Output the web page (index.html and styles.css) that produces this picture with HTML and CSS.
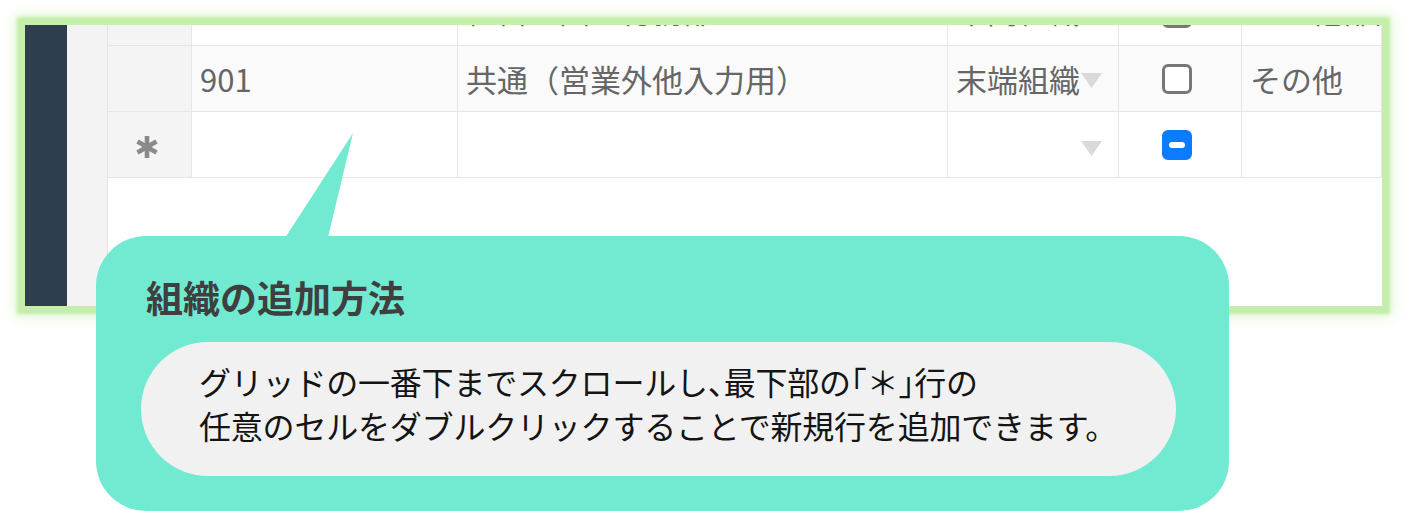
FILE: index.html
```html
<!DOCTYPE html>
<html lang="ja">
<head>
  <meta charset="UTF-8" />
  <title>組織の追加方法</title>
  <link rel="stylesheet" href="styles.css">
</head>
<body>
  <div class="frame">
    <div class="sidebar"></div>
    <div class="gutter"></div>
    <div class="grid">
      <div class="row row-cut">
        <div class="cell head"></div>
        <div class="cell"></div>
        <div class="cell">経営企画・総務部</div>
        <div class="cell select">中間組織<span class="caret"></span></div>
        <div class="cell check"><span class="box"></span></div>
        <div class="cell">その他部門</div>
      </div>
      <div class="row row-alt">
        <div class="cell head"></div>
        <div class="cell">901</div>
        <div class="cell">共通（営業外他入力用）</div>
        <div class="cell select">末端組織<span class="caret"></span></div>
        <div class="cell check"><span class="box"></span></div>
        <div class="cell">その他</div>
      </div>
      <div class="row">
        <div class="cell head">
          <svg class="star" width="24" height="24" viewBox="0 0 24 24">
            <g stroke="#8a8a8a" stroke-width="4.6" stroke-linecap="butt">
              <line x1="12" y1="1" x2="12" y2="23" />
              <line x1="2.5" y1="6.5" x2="21.5" y2="17.5" />
              <line x1="2.5" y1="17.5" x2="21.5" y2="6.5" />
            </g>
          </svg>
        </div>
        <div class="cell"></div>
        <div class="cell"></div>
        <div class="cell select"><span class="caret"></span></div>
        <div class="cell check"><span class="box indeterminate"></span></div>
        <div class="cell"></div>
      </div>
    </div>
  </div>

  <div class="callout">
    <h2>組織の追加方法</h2>
    <div class="note">
      <p>グリッドの一番下までスクロールし<span class="half">、</span>最下部の<span class="half">「</span>＊<span class="half">」</span>行の</p>
      <p>任意のセルをダブルクリックすることで新規行を追加できます。</p>
    </div>
  </div>
</body>
</html>
```

FILE: styles.css
```css
* {
  margin: 0;
  padding: 0;
  box-sizing: border-box;
}
body {
  background: #fff;
  width: 1407px;
  height: 511px;
  overflow: hidden;
  position: relative;
  font-family: "Noto Sans CJK JP", "Noto Sans", sans-serif;
}
.frame {
  margin: 25px 0 0 25px;
  width: 1357px;
  height: 281px;
  display: flex;
  overflow: hidden;
  box-shadow: 0 0 3px 8px #c4eea9, 0 0 12px 10px rgba(196, 238, 169, 0.55);
}
.sidebar {
  width: 42px;
  background: #2f3e4e;
}
.gutter {
  width: 41px;
  background: #f3f3f3;
  border-right: 1px solid #e2e2e2;
}
.grid {
  flex: 1;
  background: #fff;
}
.row {
  display: grid;
  grid-template-columns: 84px 266px 490px 171px 123px 1fr;
  height: 66px;
}
.row-cut {
  margin-top: -45px;
}
.row-cut .cell {
  padding-bottom: 7px;
}
.cell {
  border-right: 1px solid #e6e6e6;
  border-bottom: 1px solid #e6e6e6;
  display: flex;
  align-items: center;
  padding: 0 8px;
  font-size: 31px;
  color: #666;
  white-space: nowrap;
  overflow: hidden;
  position: relative;
}
.row-alt .cell {
  background: #fafafa;
}
.row .head {
  background: #f4f4f4;
  justify-content: center;
  padding: 4px 6px 0 0;
}
.caret {
  position: absolute;
  right: 16px;
  top: 29px;
  width: 21px;
  height: 15px;
  background: #dadada;
  clip-path: polygon(0 0, 100% 0, 50% 100%);
}
.row-alt .caret {
  top: 27px;
}
.check {
  justify-content: center;
}
.row .check {
  padding: 0 6px 0 0;
}
.box {
  width: 30px;
  height: 30px;
  border: 3px solid #777;
  border-radius: 6px;
  background: #fff;
}
.box.indeterminate {
  background: #0b7bff;
  border-color: #0b7bff;
  position: relative;
}
.box.indeterminate::after {
  content: "";
  position: absolute;
  left: 4px;
  right: 4px;
  top: 9px;
  height: 6px;
  border-radius: 3px;
  background: #fff;
}

.callout {
  position: absolute;
  left: 96px;
  top: 236px;
  width: 1133px;
  height: 275px;
  background: #72ead1;
  border-radius: 50px;
  padding: 39px 0 0 45px;
}
.callout::before {
  content: "";
  position: absolute;
  left: 189px;
  top: -103px;
  width: 68px;
  height: 105px;
  background: #72ead1;
  clip-path: polygon(0 100%, 100% 0, 63% 100%);
}
.callout h2 {
  font-size: 37px;
  font-weight: 700;
  line-height: 44px;
  color: #3f3f3f;
  margin-left: 5px;
  margin-bottom: 23px;
}
.note {
  width: 1035px;
  height: 134px;
  background: #f1f1f1;
  border-radius: 67px;
  padding: 17px 0 0 58px;
}
.note p {
  font-size: 32px;
  line-height: 44px;
  color: #141414;
  white-space: nowrap;
  letter-spacing: -0.2px;
}
.half {
  font-feature-settings: "halt";
}
```
